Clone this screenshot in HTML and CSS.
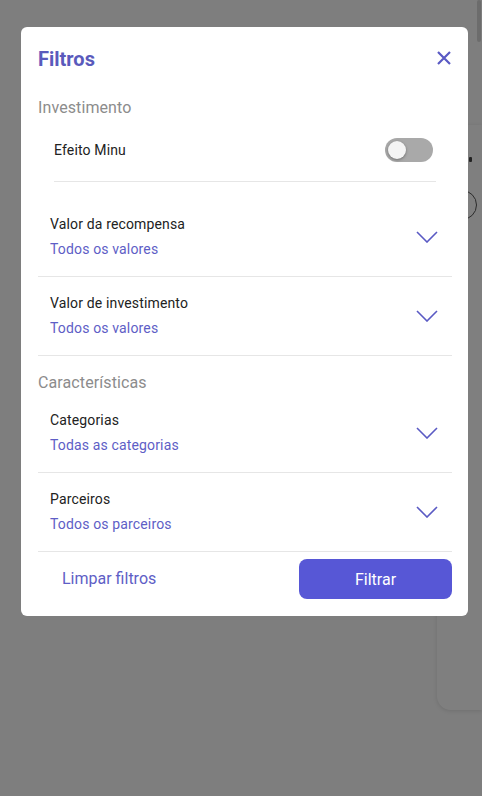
FILE: index.html
```html
<!DOCTYPE html>
<html lang="pt-BR">
<head>
<meta charset="utf-8">
<title>Filtros</title>
<link rel="stylesheet" href="styles.css">
</head>
<body>
<div class="page">
  <div class="page-top">
    <div class="scrollbar"></div>
  </div>
  <div class="bg-card">
    <span class="bg-dot"></span>
    <span class="bg-circle"></span>
  </div>
</div>

<div class="overlay">
  <div class="modal">
    <div class="modal-header">
      <h2 class="modal-title">Filtros</h2>
      <button class="close-btn" aria-label="Fechar">
        <svg width="14" height="14" viewBox="0 0 14 14"><path d="M1 1 L13 13 M13 1 L1 13" stroke="#5a5ac4" stroke-width="2.2" stroke-linecap="butt" fill="none"/></svg>
      </button>
    </div>

    <div class="section-title first">Investimento</div>
    <div class="toggle-row">
      <span class="toggle-label">Efeito Minu</span>
      <span class="toggle"><span class="toggle-thumb"></span></span>
    </div>

    <div class="filter-item">
      <div class="filter-text">
        <div class="filter-label">Valor da recompensa</div>
        <div class="filter-value">Todos os valores</div>
      </div>
      <svg class="chevron" width="22" height="12" viewBox="0 0 22 12"><polyline points="1,1 11,11 21,1" fill="none" stroke="#5a5ac4" stroke-width="1.6"/></svg>
    </div>
    <div class="filter-item">
      <div class="filter-text">
        <div class="filter-label">Valor de investimento</div>
        <div class="filter-value">Todos os valores</div>
      </div>
      <svg class="chevron" width="22" height="12" viewBox="0 0 22 12"><polyline points="1,1 11,11 21,1" fill="none" stroke="#5a5ac4" stroke-width="1.6"/></svg>
    </div>

    <div class="section-title">Características</div>
    <div class="filter-item">
      <div class="filter-text">
        <div class="filter-label">Categorias</div>
        <div class="filter-value">Todas as categorias</div>
      </div>
      <svg class="chevron" width="22" height="12" viewBox="0 0 22 12"><polyline points="1,1 11,11 21,1" fill="none" stroke="#5a5ac4" stroke-width="1.6"/></svg>
    </div>
    <div class="filter-item">
      <div class="filter-text">
        <div class="filter-label">Parceiros</div>
        <div class="filter-value">Todos os parceiros</div>
      </div>
      <svg class="chevron" width="22" height="12" viewBox="0 0 22 12"><polyline points="1,1 11,11 21,1" fill="none" stroke="#5a5ac4" stroke-width="1.6"/></svg>
    </div>

    <div class="modal-footer">
      <button class="clear-btn">Limpar filtros</button>
      <button class="apply-btn">Filtrar</button>
    </div>
  </div>
</div>
</body>
</html>
```

FILE: styles.css
```css
* { box-sizing: border-box; }

html, body {
  margin: 0;
  padding: 0;
}

body {
  font-family: Roboto, "Liberation Sans", Arial, sans-serif;
  background: #fcfcfc;
  width: 482px;
  height: 796px;
  overflow: hidden;
}

.page {
  height: 796px;
  overflow: hidden;
}

.page-top {
  height: 125px;
  display: flex;
  justify-content: flex-end;
}

.scrollbar {
  width: 4px;
  height: 42px;
  margin-right: 1px;
  background: #d8d8d8;
  border-radius: 2px;
}

.bg-card {
  margin-left: 437px;
  height: 585px;
  background: #ffffff;
  border-radius: 0 0 0 14px;
  box-shadow: 0 1px 4px rgba(0, 0, 0, 0.12);
  display: flex;
  flex-direction: column;
  align-items: flex-start;
  padding: 32px 0 0 10px;
}

.bg-dot {
  display: block;
  width: 3px;
  height: 5px;
  margin-left: 22px;
  background: #444;
  border-radius: 1px;
}

.bg-circle {
  display: block;
  width: 30px;
  height: 30px;
  margin-top: 28px;
  border: 1px solid #555;
  border-radius: 50%;
}

.overlay {
  position: fixed;
  inset: 0;
  background: rgba(0, 0, 0, 0.5);
  padding: 27px 14px 0 21px;
}

.modal {
  width: 447px;
  background: #ffffff;
  border-radius: 6px;
  padding: 0 16px 17px 17px;
}

.modal-header {
  padding-top: 20px;
  height: 44px;
  display: flex;
  justify-content: space-between;
  align-items: center;
}

.modal-title {
  margin: 0;
  font-size: 20px;
  line-height: 24px;
  font-weight: 700;
  color: #5a5abc;
}

.close-btn {
  border: none;
  background: none;
  padding: 0;
  margin: -2px 1px 0 0;
  width: 14px;
  height: 14px;
  display: flex;
}

.section-title {
  font-size: 16px;
  line-height: 20px;
  letter-spacing: 0.1px;
  color: #8c8c8c;
  padding-top: 17px;
  margin-bottom: 1px;
}

.section-title.first {
  padding-top: 27px;
  margin-bottom: 0;
}

.toggle-row {
  margin: 0 16px 16px;
  padding: 20px 3px 19px 0;
  border-bottom: 1px solid #e6e6e6;
  display: flex;
  justify-content: space-between;
  align-items: center;
}

.toggle-label {
  font-size: 14px;
  line-height: 24px;
  letter-spacing: 0.15px;
  color: #222222;
}

.toggle {
  width: 48px;
  height: 24px;
  border-radius: 12px;
  background: #a9a9a9;
  display: flex;
  align-items: center;
  padding-left: 3px;
}

.toggle-thumb {
  width: 18px;
  height: 18px;
  border-radius: 50%;
  background: #f4f4f4;
  box-shadow: 0 1px 3px rgba(0, 0, 0, 0.35);
}

.filter-item {
  display: flex;
  justify-content: space-between;
  align-items: center;
  padding: 16px 14px 17px 12px;
  border-bottom: 1px solid #e6e6e6;
}

.filter-text {
  display: flex;
  flex-direction: column;
  gap: 5px;
}

.filter-label {
  font-size: 14px;
  line-height: 20px;
  letter-spacing: 0.15px;
  color: #222222;
}

.filter-value {
  font-size: 14px;
  line-height: 20px;
  letter-spacing: 0.15px;
  color: #5e5ec6;
}

.chevron {
  display: block;
}

.modal-footer {
  margin-top: 7px;
  display: flex;
  justify-content: space-between;
  align-items: center;
}

.clear-btn {
  border: none;
  background: none;
  padding: 0 0 0 24px;
  font-family: inherit;
  font-size: 16px;
  line-height: 20px;
  color: #5e5ec6;
}

.apply-btn {
  border: none;
  width: 153px;
  height: 40px;
  border-radius: 8px;
  background: #5757d6;
  color: #ffffff;
  font-family: inherit;
  font-size: 16px;
}
```
